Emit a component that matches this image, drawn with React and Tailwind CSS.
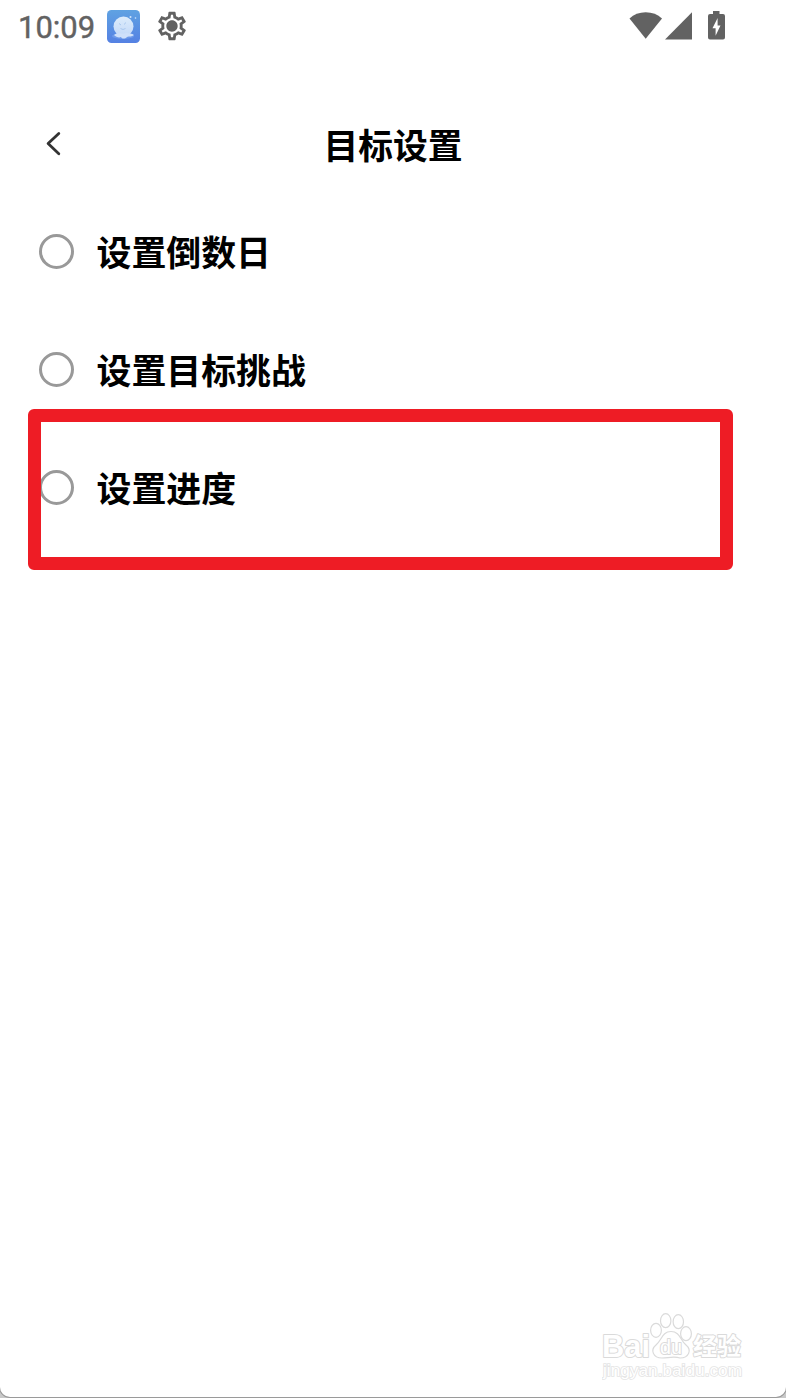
import { MdOutlineSettings } from "react-icons/md";

const options = ["设置倒数日", "设置目标挑战", "设置进度"];

// Small weather-like app icon shown in the notification area
const AppBadge = () => (
  <svg className="w-[33px] h-[33px]" viewBox="0 0 33 33">
    <defs>
      <linearGradient id="badge" x1="0" y1="0" x2="0" y2="1">
        <stop offset="0" stopColor="#5fa2e2" />
        <stop offset="1" stopColor="#5581e3" />
      </linearGradient>
      <linearGradient id="moon" x1="0" y1="0" x2="0" y2="1">
        <stop offset="0" stopColor="#dcecfb" />
        <stop offset="1" stopColor="#c4d9f8" />
      </linearGradient>
    </defs>
    <rect width="33" height="33" rx="4.5" fill="url(#badge)" />
    <ellipse cx="16" cy="26" rx="11" ry="3" fill="#7fa7ee" opacity="0.6" />
    <circle cx="16.5" cy="16.5" r="10" fill="url(#moon)" />
    <path d="M7 25c2-2 4-1 5-2 2 1 5 1 8 0 2 1 5 0 7 2-2 2-5 1-7 2-2 2-5 2-6 0-2 1-5 0-7-2z" fill="#cfe0fa" />
    <path d="M12 13.5l2 1.5M18.5 12.5l-1 2M13.5 18.5q2.5 2 5 0" stroke="#a9c8ee" fill="none" />
    <circle cx="23.5" cy="7" r="1" fill="#d4e7fb" />
    <circle cx="28.5" cy="8" r="0.8" fill="#d4e7fb" />
  </svg>
);

const StatusBar = () => (
  <div className="flex h-[53px] items-center justify-between pl-[18px] pr-[60px] text-[#626262]">
    <div className="flex items-center">
      <span className="w-[89px] pt-[2px] font-[Roboto,sans-serif] text-[31px] leading-[36px] [-webkit-text-stroke:0.4px_#626262]">10:09</span>
      <AppBadge />
      <span className="relative -top-px ml-[15px]">
        <MdOutlineSettings className="h-[34px] w-[34px]" />
        <span className="absolute left-[12px] top-[12px] h-[10px] w-[10px] rounded-full bg-[#626262]" />
      </span>
    </div>
    <svg className="mb-px h-[30px] w-[97px]" viewBox="0 0 97 30" fill="currentColor">
      {/* wifi */}
      <path d="M0.5 7.5Q7 1.3 16.7 1.3T33 7.5L16.7 27.8Z" />
      {/* mobile signal */}
      <path d="M36 28.5L63 1.3V28.5Z" />
      {/* charging battery */}
      <path d="M84 0h6.5v3H94q2 0 2 2v21.5q0 2-2 2H81q-2 0-2-2V5q0-2 2-2h3z" />
      <path d="M88.6 7L83.5 17.3H86.6V24.8L91.5 14.5H88.6Z" fill="#fff" />
    </svg>
  </div>
);

const Header = () => (
  <header className="relative flex h-[72px] items-center justify-center">
    <button type="button" aria-label="返回" className="absolute left-[44px] top-[23px]">
      <svg className="h-[26px] w-[18px]" viewBox="0 0 18 26" fill="none" stroke="#333" strokeWidth="2.8" strokeLinecap="round" strokeLinejoin="round">
        <path d="M14.8 2.5L4.1 12.6L14.8 22.7" />
      </svg>
    </button>
    <h1 className="text-[34.8px] font-bold leading-[48px]">目标设置</h1>
  </header>
);

const Watermark = () => (
  <div className="absolute left-[602px] top-[1312px] h-[70px] w-[150px]">
    <svg className="h-full w-full" viewBox="0 0 150 70" fill="#fff" stroke="#dadada" strokeWidth="1.2">
      <ellipse cx="54" cy="18.3" rx="5.4" ry="7" />
      <ellipse cx="63.7" cy="8.7" rx="5.2" ry="7" />
      <ellipse cx="76.3" cy="9.7" rx="5.2" ry="7" />
      <ellipse cx="84" cy="21.7" rx="5.4" ry="7" />
      <path d="M69 19.5C60 19.5 60 28 54 33C48 38 51 46 60 46C66 46 72 44 78 46C87 46 90 38 84 33C78 28 78 19.5 69 19.5Z" />
      <g fontFamily="Liberation Sans, Noto Sans CJK SC, sans-serif" fontWeight="bold" strokeLinejoin="round" strokeWidth="2" paintOrder="stroke">
        <text x="0" y="44.5" fontSize="31" textLength="48" lengthAdjust="spacingAndGlyphs">Bai</text>
        <text x="58" y="41.5" fontSize="20" textLength="22" lengthAdjust="spacingAndGlyphs" fontWeight="normal">du</text>
        <text x="91" y="43" fontSize="24" textLength="48" lengthAdjust="spacingAndGlyphs">经验</text>
      </g>
      <text x="1" y="64" fontFamily="Liberation Sans, sans-serif" fontSize="16" textLength="139" lengthAdjust="spacingAndGlyphs" strokeWidth="1.6" stroke="#e4e4e4" paintOrder="stroke">
        jingyan.baidu.com
      </text>
    </svg>
  </div>
);

export default function App() {
  return (
    <div className="h-[1398px] w-[786px] overflow-hidden bg-[#c9c9c9] font-['Noto_Sans_CJK_SC',sans-serif] text-black">
      <div className="relative h-[1397px] rounded-b-[10px] bg-white shadow-[0_0_0_1px_#9a9a9a]">
        <StatusBar />
        <div className="pt-[55px]">
          <Header />
        </div>
        <ul className="pt-[12px]">
          {options.map((label) => (
            <li key={label} className="flex h-[118px] items-center pl-[39px]">
              <span className="h-[35px] w-[35px] rounded-full border-[3px] border-[#999]" />
              <span className="ml-[22.5px] text-[34.9px] font-bold leading-[48px]">{label}</span>
            </li>
          ))}
        </ul>
        {/* Highlight frame over the last option */}
        <div className="absolute left-[28px] top-[409px] h-[161px] w-[705px] rounded-[6px] border-[13px] border-[#ee1c25]" />
        <Watermark />
      </div>
    </div>
  );
}
